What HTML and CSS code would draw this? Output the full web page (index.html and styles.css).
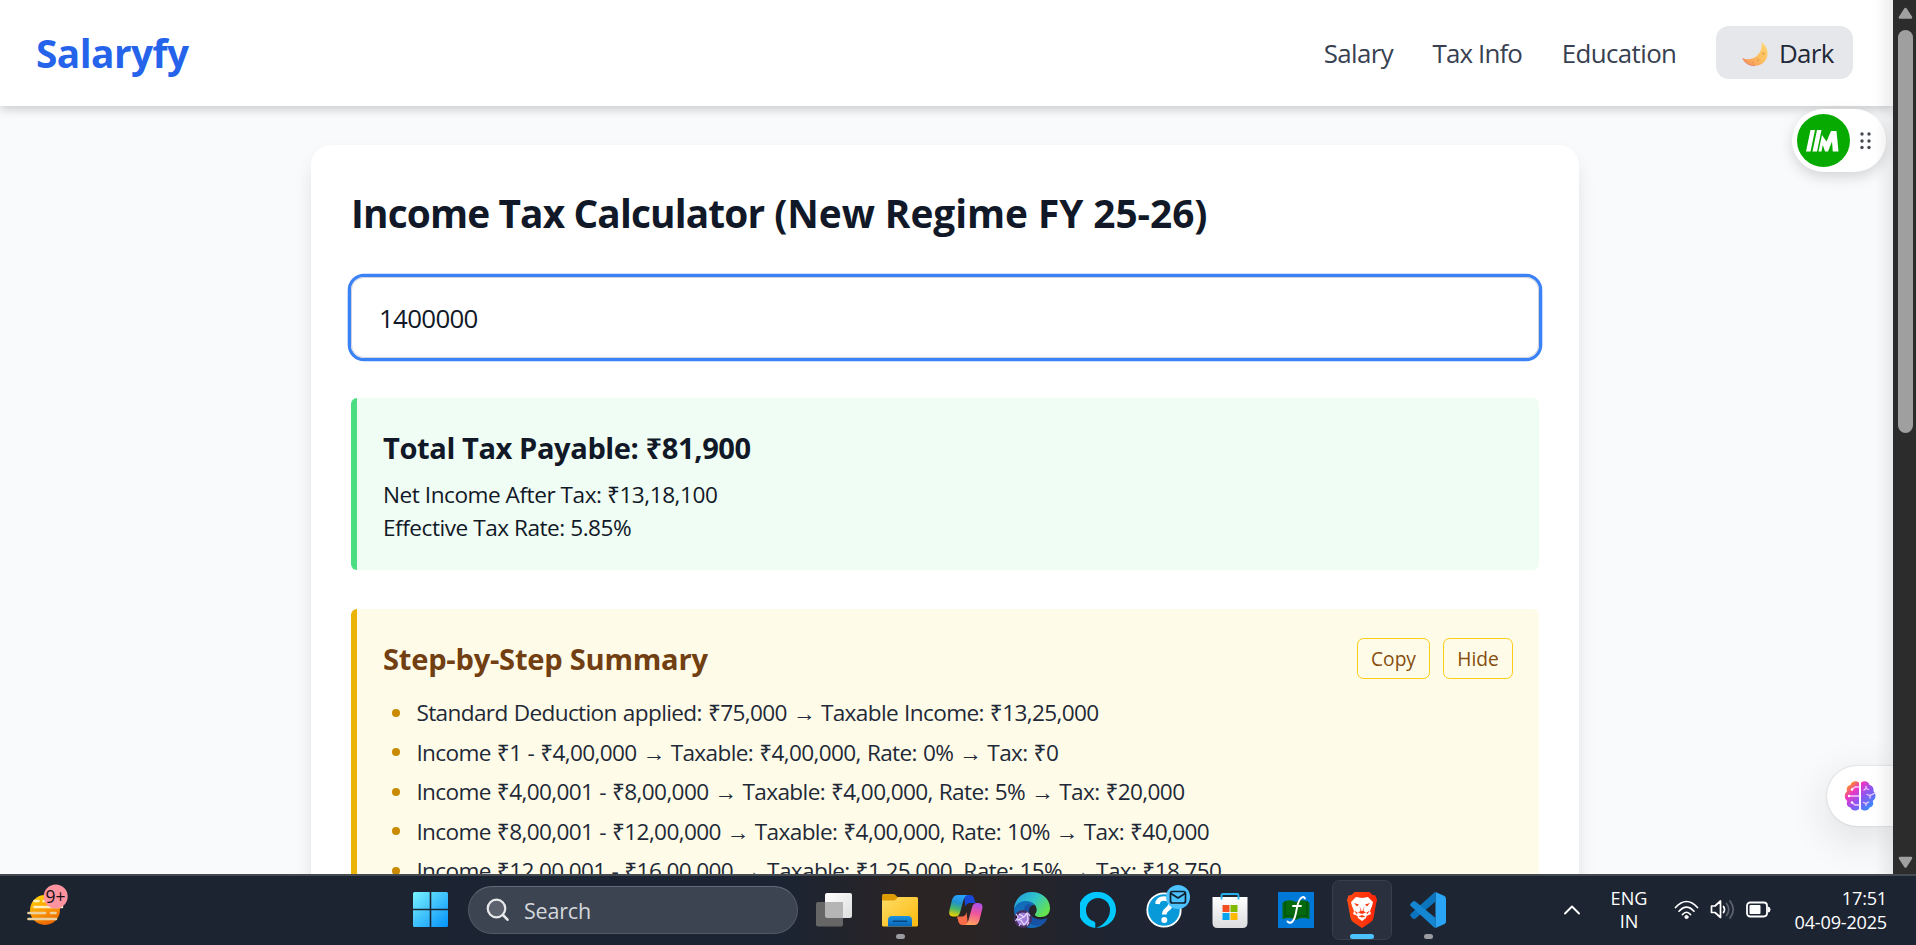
FILE: index.html
```
<!DOCTYPE html>
<html lang="en">
<head>
<meta charset="utf-8">
<title>Salaryfy</title>
<link rel="stylesheet" href="styles.css">
</head>
<body>
<div class="viewport">
  <div class="page">
    <header class="header">
      <div class="logo">Salaryfy</div>
      <nav class="nav">
        <a class="nav-salary">Salary</a>
        <a class="nav-tax">Tax Info</a>
        <a class="nav-edu">Education</a>
        <button class="theme">
          <svg width="26" height="26" viewBox="0 0 26 26">
            <defs><linearGradient id="moon" x1="1" y1="0" x2="0.2" y2="1"><stop offset="0" stop-color="#ffd873"/><stop offset=".6" stop-color="#fdbd5f"/><stop offset="1" stop-color="#f7935a"/></linearGradient></defs>
            <path d="M19.5 1C23.5 4 26 8.500 25.500 13.500C24.800 20.500 19.500 24.700 13 24.700C7.500 24.700 2.800 22 .8 17.300C5 19 10.500 18.500 14.500 15.200C18.500 11.900 20.300 6.500 19.500 1Z" fill="url(#moon)"/>
            <circle cx="21.500" cy="12.500" r="1.500" fill="#eea94f"/><circle cx="16" cy="19" r="1.600" fill="#f0a457"/><circle cx="11" cy="21.500" r="1" fill="#ee9a52"/><path d="M.8 17.300Q4 24.700 13 24.700" fill="none" stroke="#e2795a" stroke-width=".8"/>
          </svg>
          <span>Dark</span>
        </button>
      </nav>
    </header>
    <main class="card">
      <h1 class="title"><span class="title-name">Income Tax Calculator</span> (New Regime FY 25-26)</h1>
      <div class="field">1400000</div>
      <section class="panel result">
        <h2 class="panel-title total">Total Tax Payable: ₹81,900</h2>
        <p class="net">Net Income After Tax: ₹13,18,100</p>
        <p class="rate">Effective Tax Rate: 5.85%</p>
      </section>
      <section class="panel steps">
        <div class="steps-head">
          <h2 class="panel-title">Step-by-Step Summary</h2>
          <div class="actions"><button class="action copy">Copy</button><button class="action">Hide</button></div>
        </div>
        <ul class="list">
          <li>Standard Deduction applied: ₹75,000 → Taxable Income: ₹13,25,000</li>
          <li>Income ₹1 - ₹4,00,000 → Taxable: ₹4,00,000, Rate: 0% → Tax: ₹0</li>
          <li>Income ₹4,00,001 - ₹8,00,000 → Taxable: ₹4,00,000, Rate: 5% → Tax: ₹20,000</li>
          <li>Income ₹8,00,001 - ₹12,00,000 → Taxable: ₹4,00,000, Rate: 10% → Tax: ₹40,000</li>
          <li>Income ₹12,00,001 - ₹16,00,000 → Taxable: ₹1,25,000, Rate: 15% → Tax: ₹18,750</li>
        </ul>
      </section>
    </main>
    <div class="widget">
      <svg width="53" height="53" viewBox="0 0 53 53"><circle cx="26.500" cy="26.500" r="26.500" fill="#07aa00"/>
        <path d="M13.500 16H18L13.500 37.500H9ZM20 16H24.500L20 37.500H15.500ZM25 21L29.500 27.500L34 17H39.500L41.500 37.500H35.800L35 27.500L31 37.500H28L25.800 31L24.500 37.500H21.500Z" fill="#fff"/></svg>
      <svg width="11" height="18" viewBox="0 0 11 18" fill="#44494f"><circle cx="2" cy="2" r="1.700"/><circle cx="9" cy="2" r="1.700"/><circle cx="2" cy="9" r="1.700"/><circle cx="9" cy="9" r="1.700"/><circle cx="2" cy="15.500" r="1.700"/><circle cx="9" cy="15.500" r="1.700"/></svg>
    </div>
    <div class="brain">
      <svg width="32" height="30" viewBox="0 0 32 30">
        <defs><linearGradient id="br" x1="0" y1="0" x2="1" y2="1"><stop offset="0" stop-color="#ffb000"/><stop offset=".14" stop-color="#f98a2c"/><stop offset=".32" stop-color="#ed35c4"/><stop offset=".55" stop-color="#8f55f0"/><stop offset=".85" stop-color="#3f86fb"/><stop offset="1" stop-color="#2cc4f4"/></linearGradient></defs>
        <path d="M15 1.500V28C12 30.500 7.500 30 6.500 26.500C3 26 2 22.500 3.300 20C0 18 0 12.500 3 10.500C2 7 3.500 4.300 6.500 4C7.500 0 12-.8 15 1.500ZM17 1.500C20-.8 24.500 0 25.500 4C28.500 4.300 30 7 29.500 10.500C32.500 12.500 32 18 28.700 20C30 22.500 29 26 25.500 26.500C24.500 30 20 30.500 17 28Z" fill="url(#br)"/>
        <g fill="none" stroke="#f3ccff" stroke-width="1.300" stroke-linecap="round"><path d="M15 6H11L8 8.500M15 15H5M15 24H11L8 21.500M20 9L22 7.500L24.500 8.500M22 7.500V5.500M23 13.500L26 14.500L31 12M26 14.500V17M19.500 21.500L22 22.500L24.500 21M22 22.500V24.500"/></g>
        <g fill="#fff"><circle cx="8" cy="8.500" r="1.200"/><circle cx="5" cy="15" r="1.200"/><circle cx="8" cy="21.500" r="1.200"/></g>
      </svg>
    </div>
  </div>
  <div class="scrollbar">
    <svg width="15" height="13" viewBox="0 0 15 13"><path d="M7.500 2L13 10.500H2Z" fill="#a0a0a0" stroke="#a0a0a0" stroke-width="2.600" stroke-linejoin="round"/></svg>
    <div class="thumb"></div>
    <svg class="down" width="15" height="13" viewBox="0 0 15 13"><path d="M7.500 10.500L2 2H13Z" fill="#a0a0a0" stroke="#a0a0a0" stroke-width="2.600" stroke-linejoin="round"/></svg>
  </div>
</div>
<footer class="taskbar">
  <div class="weather">
    <svg width="44" height="44" viewBox="0 0 44 44">
      <defs><linearGradient id="sun" x1=".3" y1="0" x2=".7" y2="1"><stop offset="0" stop-color="#ffd000"/><stop offset=".5" stop-color="#fb9a06"/><stop offset="1" stop-color="#e95f00"/></linearGradient></defs>
      <circle cx="19" cy="27" r="15" fill="url(#sun)"/>
      <g stroke="#fbe6b4" stroke-width="2.600" stroke-linecap="round"><path d="M8.500 18H12.500M17.500 18H20M8.500 24H36" stroke="#fff0c0"/><path d="M2.500 30H19M25 30H29.500M2.500 36H30" stroke="#ecd2a0"/></g>
      <circle cx="29.700" cy="13.500" r="12" fill="#ff939f"/>
    </svg>
    <span class="count">9+</span>
  </div>
  <svg class="start" width="35" height="35" viewBox="0 0 35 35">
    <defs><linearGradient id="win" x1="0" y1="0" x2="1" y2="1"><stop offset="0" stop-color="#78f2ff"/><stop offset=".5" stop-color="#3fc1fb"/><stop offset="1" stop-color="#0492fb"/></linearGradient></defs>
    <path d="M1.500 0H16.700V16.700H0V1.500Q0 0 1.500 0ZM18.300 0H33.500Q35 0 35 1.500V16.700H18.300ZM0 18.300H16.700V35H1.500Q0 35 0 33.500ZM18.300 18.300H35V33.500Q35 35 33.500 35H18.300Z" fill="url(#win)"/>
  </svg>
  <div class="search">
    <svg width="24" height="24" viewBox="0 0 24 24" fill="none" stroke="#e6e8ea" stroke-width="2.200" stroke-linecap="round"><circle cx="10.500" cy="10.500" r="8.800" fill="#5c626d"/><path d="M17 17L21.500 21.700" stroke-width="2.600"/></svg>
    <span>Search</span>
  </div>
  <div class="apps">
    <div class="app"><svg width="36" height="36" viewBox="0 0 36 36"><defs><linearGradient id="tv" x1="0" y1="0" x2="1" y2="1"><stop offset="0" stop-color="#fff"/><stop offset="1" stop-color="#dedede"/></linearGradient></defs><rect x="9" y="1" width="27" height="25" rx="2" fill="url(#tv)"/><rect y="10" width="27" height="24.500" rx="2" fill="#666"/><path d="M9 10H27V26H11Q9 26 9 24Z" fill="#b5b5b5"/></svg></div>
    <div class="app"><svg width="36" height="36" viewBox="0 0 36 36"><defs><linearGradient id="fo" x1="0" y1="0" x2="1" y2="1"><stop offset="0" stop-color="#ffdc67"/><stop offset="1" stop-color="#fbb90c"/></linearGradient><linearGradient id="fb" x1="0" y1="0" x2="0" y2="1"><stop offset="0" stop-color="#1c93e0"/><stop offset="1" stop-color="#0864b6"/></linearGradient></defs><path d="M0 12V3.500Q0 2 1.500 2H11Q12.500 2 13.500 3L16 5.500V12Z" fill="#dd9b05"/><path d="M0 8.500H11.500Q13 8.500 14 7.500L16 5H34.500Q36 5 36 6.500V33Q36 34.500 34.500 34.500H1.500Q0 34.500 0 33Z" fill="url(#fo)"/><path d="M6 34.500V28Q6 24 10 24H26Q30 24 30 28V34.500Z" fill="url(#fb)"/><path d="M11.500 29.200H24.500" stroke="#07457f" stroke-width="1.600" stroke-linecap="round"/></svg><i class="dot"></i></div>
    <div class="app"><svg width="36" height="36" viewBox="0 0 36 36"><defs><linearGradient id="c1" x1=".5" y1="0" x2=".3" y2="1"><stop offset="0" stop-color="#28a4ff"/><stop offset=".35" stop-color="#2292cf"/><stop offset=".65" stop-color="#48b668"/><stop offset="1" stop-color="#f3d000"/></linearGradient><linearGradient id="c2" x1=".6" y1="0" x2=".4" y2="1"><stop offset="0" stop-color="#ad4fe8"/><stop offset=".45" stop-color="#ef559c"/><stop offset="1" stop-color="#ffa35c"/></linearGradient></defs><path d="M16 3H22Q25 3 26 6L27.500 11H22Q18.500 11 17.500 15Z" fill="#1748d6"/><path d="M20 33H14.500Q11.500 33 10.500 30L9 24.500H14Q17.500 24.500 18.500 20Z" fill="#f76b48"/><path d="M10 3H19.500Q16.500 4 15.500 8L12 20.500Q11 24.500 7.500 24.500H5Q0 24.500 1.500 18L4 8Q5.500 3 10 3Z" fill="url(#c1)"/><path d="M27 33H17Q19.500 32 20.500 28L24 15.500Q25 11 28.500 11H30.500Q36 11 34 18L31.500 28Q30 33 27 33Z" fill="url(#c2)"/></svg></div>
    <div class="app"><svg width="36" height="36" viewBox="0 0 36 36"><defs><linearGradient id="e1" x1="0" y1="0" x2="1" y2=".6"><stop offset="0" stop-color="#2098e0"/><stop offset=".55" stop-color="#31c4ca"/><stop offset="1" stop-color="#65e34e"/></linearGradient></defs><path d="M18 0A18 18 0 0 0 0 18A18 18 0 0 0 18 36C25 36 30.500 32 33 27C24 30 14 27 14 20C14 16 18 12 22 13Z" fill="#126cba"/><path d="M0 17C1 6 9 0 18 0C28 0 36 7 36 16C36 22 32 25 27 25C23 25 20.500 23.500 21 22C25 18 22 9 12 9C6 9 2 12 0 17Z" fill="url(#e1)"/><path d="M10 19C10 30 20 36 27 33C30 32 33 28 33 26C26 29 19 27 16 22C14 19 15 15 18 13C13 11 10 14 10 19Z" fill="#1751a5"/><circle cx="9" cy="27" r="9" fill="#47305f"/><circle cx="9" cy="27" r="6.500" fill="#a17fd8"/><path d="M5 22L10 25L13 21L14 28L10 33L7 28L3 28L10 25" fill="none" stroke="#eadcff" stroke-width="1.200"/><path d="M2 22L4 25L1.500 29M5 34L7 31M13 33.500L15 30M16 24L13.500 21" stroke="#dcc8ff" stroke-width="1.300"/></svg></div>
    <div class="app"><svg width="36" height="36" viewBox="0 0 36 36"><path fill="#00c8ff" fill-rule="evenodd" d="M18 0A18 18 0 0 1 36 18C36 28 28 35.500 16 36C22 34 30 27.500 30 18A12 12 0 0 0 6 18C6 24 9.500 28 14 29.500Q15.500 30 15.300 32V36A18 18 0 0 1 18 0Z"/></svg></div>
    <div class="app"><svg class="over" width="46" height="46" viewBox="0 0 46 46"><circle cx="18" cy="28" r="16.700" fill="#089ad8" stroke="#fff" stroke-width="1.800"/><path d="M11.500 22Q12 16.500 18 16.500Q24.500 16.500 24.500 22Q24.500 25 21 27.500Q18.300 29.500 18.300 32.500" fill="none" stroke="#fff" stroke-width="4.600"/><circle cx="18.300" cy="38" r="3" fill="#fff"/><circle cx="32" cy="15" r="12" fill="#4cc2ff"/><rect x="24.500" y="9.500" width="15" height="11.500" rx="2" fill="none" stroke="#10202c" stroke-width="1.700"/><path d="M25 11.500L32 16L39 11.500" fill="none" stroke="#10202c" stroke-width="1.700"/></svg></div>
    <div class="app"><svg width="36" height="36" viewBox="0 0 36 36"><defs><linearGradient id="st" x1="0" y1="0" x2="0" y2="1"><stop offset="0" stop-color="#fff"/><stop offset="1" stop-color="#dcdcdf"/></linearGradient></defs><path d="M.5 5H35.500V31Q35.500 36 30.500 36H5.500Q.5 36 .5 31Z" fill="url(#st)"/><path d="M9.500 7.500V3.500Q9.500 2 11 2H25Q26.500 2 26.500 3.500V7.500" fill="none" stroke="#28b0ee" stroke-width="1.800"/><path d="M10.500 13H17.500V20H10.500Z" fill="#f25022"/><path d="M18.500 13H25.500V20H18.500Z" fill="#7fba00"/><path d="M10.500 21H17.500V28H10.500Z" fill="#00a4ef"/><path d="M18.500 21H25.500V28H18.500Z" fill="#ffb900"/></svg></div>
    <div class="app"><svg width="36" height="36" viewBox="0 0 36 36"><path d="M0 0H36V36H0Z" fill="#0078d7"/><path d="M4.500 11L7 9Q13 7 18 10Q23 7 29 9L31.500 11V27Q23 24.500 18 28Q12 24.500 4.500 27Z" fill="#07690d"/><path d="M7 9V24Q13 22 18 26Q23 22 29 24V9" fill="none" stroke="#034b16" stroke-width="1"/><path d="M27 6.500Q25.500 3.500 22.500 6.500Q20 9.500 18.500 18Q17 27 14.500 29.500Q12 32 9.500 29.500M15 14H23" fill="none" stroke="#fff" stroke-width="1.900" stroke-linecap="round"/></svg></div>
    <div class="app active"><svg width="36" height="36" viewBox="0 0 36 36"><defs><linearGradient id="bv"><stop offset="0" stop-color="#ff4b13"/><stop offset="1" stop-color="#ff2508"/></linearGradient></defs><path d="M10.500 0H25.500L28.500 3L31.500 3.500L33 8L32 12L29.500 26Q29 29 25.500 31L18 36L10.500 31Q7 29 6.500 26L4 12L3 8L4.500 3.500L7.500 3Z" fill="url(#bv)"/><path d="M12 5L18 6L24 5L29 10L28 14L26 19L27 22L22.500 24L22 26L18 29L14 26L13.500 24L9 22L10 19L8 14L7 10Z" fill="#fff"/><path d="M10 11L15 12.500L13 14.500ZM26 11L21 12.500L23 14.500ZM15.500 14L16.500 19L14 20.500L18 22L22 20.500L19.500 19L20.500 14L18.500 19H17.500ZM10 18.500L13.500 20.500L13 22.500ZM26 18.500L22.500 20.500L23 22.500ZM14.500 24.500L18 23L21.500 24.500L18 25.500Z" fill="#fb3a15"/></svg><i class="dot wide"></i></div>
    <div class="app"><svg width="36" height="36" viewBox="0 0 36 36"><path d="M25.500 0L34.500 4Q36 5 36 6.500V29.500Q36 31 34.500 32L25.500 36Z" fill="#2aa4f4"/><path d="M25.500 0V9.500L5.500 26.500Q4 27.500 2.800 26.500L.8 24.500Q-.5 23 .8 21.700L24 .8Q24.700 0 25.500 0Z" fill="#0b74bd"/><path d="M2.800 9.500Q4 8.500 5.500 9.500L25.500 26V36Q24.700 36 24 35.200L.8 14Q-.5 12.800 .8 11.400Z" fill="#1587d2"/></svg><i class="dot"></i></div>
  </div>
  <div class="tray">
    <svg class="chevron" width="18" height="12" viewBox="0 0 18 12" fill="none" stroke="#fff" stroke-width="1.900" stroke-linecap="round" stroke-linejoin="round"><path d="M2 9.500L9 2.500L16 9.500"/></svg>
    <div class="lang"><span>ENG</span><span>IN</span></div>
    <svg class="wifi" width="25" height="20" viewBox="0 0 25 20" fill="none" stroke="#fff" stroke-width="1.700" stroke-linecap="round"><path d="M1.500 7.500Q12.500-4.500 23.500 7.500M5 11.200Q12.500 3 20 11.200M8.500 14.500Q12.500 10 16.500 14.500"/><circle cx="12.500" cy="17" r="1.600" fill="#fff" stroke-width="1"/></svg>
    <svg class="sound" width="25" height="21" viewBox="0 0 25 21" fill="none" stroke="#fff" stroke-width="1.700" stroke-linecap="round" stroke-linejoin="round"><path d="M1.500 7H5L10.500 2V18.500L5 13.500H1.500ZM13.500 7.500Q15.500 10.500 13.500 13.500"/><path d="M16.500 4.500Q21 10.500 16.500 16.500M20 2Q26.500 10.500 20 19" stroke="#5d6470"/></svg>
    <svg class="battery" width="25" height="17" viewBox="0 0 25 17"><rect x="1" y="1.500" width="20" height="14" rx="3.200" fill="none" stroke="#fff" stroke-width="1.800"/><rect x="3.500" y="4" width="11" height="9" rx="1" fill="#fff"/><path d="M22 5.500Q24.500 6 24.500 8.500Q24.500 11 22 11.500Z" fill="#fff"/></svg>
    <div class="clock"><span>17:51</span><span>04-09-2025</span></div>
  </div>
</footer>
</body>
</html>
```
FILE: styles.css
```
* { box-sizing: border-box; }

body {
  margin: 0;
  height: 945px;
  overflow: hidden;
  display: grid;
  grid-template-rows: 874px 71px;
  background: #f9fafb;
  color: #111827;
  font-family: "Open Sans", "Noto Sans", sans-serif;
}

h1, h2, p, ul { margin: 0; padding: 0; }
button { font: inherit; margin: 0; }
svg { display: block; flex: none; }

.viewport {
  display: grid;
  grid-template-columns: 1893px 23px;
  overflow: hidden;
}

.page {
  position: relative;
  height: 874px;
  overflow: hidden;
  background: #f9fafc;
}

.page::after {
  content: "";
  position: absolute;
  inset: 0 0 0 auto;
  width: 18px;
  background: linear-gradient(90deg, rgba(0, 0, 0, 0), rgba(0, 0, 0, 0.07));
}

.header {
  position: relative;
  display: flex;
  align-items: center;
  justify-content: space-between;
  height: 106px;
  padding: 0 40px 0 36px;
  background: #fff;
  box-shadow: 0 3px 10px rgba(0, 0, 0, 0.2);
}

.logo {
  color: #2563eb;
  font-size: 38.8px;
  font-weight: 700;
  letter-spacing: -0.55px;
}

.nav {
  display: flex;
  align-items: center;
  gap: 39.6px;
  color: #374151;
  font-size: 25.9px;
}

.nav-salary { letter-spacing: -0.65px; }
.nav-tax { letter-spacing: -0.85px; }
.nav-edu { letter-spacing: -0.6px; }

.theme {
  display: flex;
  align-items: center;
  gap: 11px;
  width: 137px;
  height: 53px;
  margin-top: -1px;
  padding: 0 0 0 26px;
  border: 0;
  border-radius: 13px;
  background: #e5e7eb;
  color: #1f2937;
  letter-spacing: -0.7px;
}

.theme svg { margin-top: 3px; }
.theme span { margin-top: 1px; }

.card {
  width: 1268px;
  height: 1000px;
  margin: 39px 0 0 311px;
  padding: 41px 40px 0;
  border-radius: 20px;
  background: #fff;
  box-shadow: 0 16px 25px -5px rgba(0, 0, 0, 0.1), 0 4px 16px rgba(0, 0, 0, 0.035);
}

.title {
  height: 54px;
  font-size: 38.8px;
  line-height: 54px;
  letter-spacing: -0.05px;
  white-space: nowrap;
}

.title-name { letter-spacing: -0.85px; }

.field {
  height: 81px;
  margin-top: 37px;
  padding-left: 27px;
  border: 1px solid #d1d5db;
  border-radius: 13px;
  box-shadow: 0 0 0 3.3px #3b82f6;
  font-size: 25.9px;
  line-height: 81px;
  letter-spacing: -0.7px;
}

.panel {
  margin-top: 40px;
  padding: 27px 26px 0;
  border-left: 6.6px solid;
  border-radius: 6px;
  white-space: nowrap;
}

.panel-title {
  font-size: 29.1px;
  line-height: 46px;
  letter-spacing: -0.23px;
}

.total { letter-spacing: -0.42px; margin-bottom: 7px; }

.result {
  height: 172px;
  border-color: #4ade80;
  background: #f0fdf4;
}

.result p { font-size: 22.6px; line-height: 33px; }
.result .net { letter-spacing: -0.46px; }
.result .rate { letter-spacing: -0.47px; }

.steps {
  height: 420px;
  margin-top: 39px;
  border-color: #eab308;
  background: #fefce8;
}

.steps-head {
  display: flex;
  align-items: center;
  justify-content: space-between;
  color: #713f12;
}

.actions {
  display: flex;
  gap: 13px;
  margin-top: -2px;
}

.action {
  width: 70px;
  height: 41px;
  padding: 0;
  border: 1.65px solid #facc15;
  border-radius: 6.6px;
  background: transparent;
  color: #854d0e;
  font-size: 19.2px;
}

.copy { width: 73px; }

.list {
  display: grid;
  gap: 6.6px;
  margin-top: 14px;
  list-style: none;
  color: #1f2937;
  font-size: 22.6px;
  line-height: 33px;
  letter-spacing: -0.63px;
  word-spacing: 0.8px;
}

.list li {
  display: flex;
  align-items: center;
}

.list li::before {
  content: "";
  width: 8px;
  height: 8px;
  margin: 0 16px 0 9.4px;
  border-radius: 50%;
  background: #ca8a04;
}

/* Floating extension controls over the page */
.widget {
  position: absolute;
  top: 109px;
  left: 1792px;
  display: flex;
  align-items: center;
  gap: 10px;
  width: 94px;
  height: 63px;
  padding-left: 5px;
  border-radius: 32px;
  background: #fff;
  box-shadow: 0 5px 14px rgba(0, 0, 0, 0.15);
}

.brain {
  position: absolute;
  top: 766px;
  right: 0;
  display: flex;
  align-items: center;
  width: 66px;
  height: 60px;
  padding-left: 17px;
  border-radius: 30px 0 0 30px;
  background: #fff;
  box-shadow: 0 0 2px rgba(0, 0, 0, 0.2), 0 12px 44px rgba(0, 0, 0, 0.12);
}

.scrollbar {
  display: flex;
  flex-direction: column;
  align-items: center;
  padding: 7px 0 5px 2px;
  background: #2c2c2c;
}

.thumb {
  width: 15px;
  height: 403px;
  margin-top: 10px;
  border-radius: 8px;
  background: #9f9f9f;
}

.down { margin-top: auto; }

.taskbar {
  display: flex;
  align-items: center;
  padding-bottom: 2px;
  border-top: 2px solid #454a51;
  background: linear-gradient(90deg, #1c2430 0, #1b2433 780px, #2b2424 915px, #2a2424 970px, #1e2432 1110px, #1c2432 1916px);
  color: #fff;
}

.weather {
  position: relative;
  width: 44px;
  height: 44px;
  margin: -10px 0 0 26px;
}

.count {
  position: absolute;
  top: 1px;
  left: 17px;
  width: 25px;
  color: #1a1014;
  font-size: 17.5px;
  line-height: 24px;
  text-align: center;
}

.start { margin: 0 20px 0 343px; }

.search {
  display: flex;
  align-items: center;
  gap: 14px;
  width: 330px;
  height: 48px;
  padding-left: 17px;
  border: 1px solid #535963;
  border-top-color: #656b76;
  border-radius: 24px;
  background: #3d4451;
  color: #d5d8dc;
  font-size: 21.5px;
}

.search span { margin-top: 1px; letter-spacing: -0.2px; }

.apps {
  display: flex;
  gap: 6px;
  margin-left: 6px;
}

.app {
  position: relative;
  display: flex;
  align-items: center;
  justify-content: center;
  width: 60px;
  height: 60px;
  border-radius: 7px;
}

.over { margin: -10px 0 0 10px; }

.active {
  border: 1px solid #383e4a;
  background: #2a303d;
}

.dot {
  position: absolute;
  bottom: 1px;
  width: 9px;
  height: 5px;
  border-radius: 3px;
  background: #9a9ca2;
}

.wide {
  bottom: 0;
  width: 24px;
  background: #4cc2ff;
}

.tray {
  display: flex;
  align-items: center;
  margin-left: auto;
  padding-right: 29px;
  font-size: 18.1px;
  line-height: 24px;
}

.lang, .clock {
  display: flex;
  flex-direction: column;
}

.lang {
  align-items: center;
  width: 38px;
  margin: 1px 26px 0 29px;
  line-height: 23px;
}

.clock {
  align-items: flex-end;
  width: 96px;
  margin-left: 20px;
  letter-spacing: -0.2px;
}

.sound { margin: 0 11px; }
```
